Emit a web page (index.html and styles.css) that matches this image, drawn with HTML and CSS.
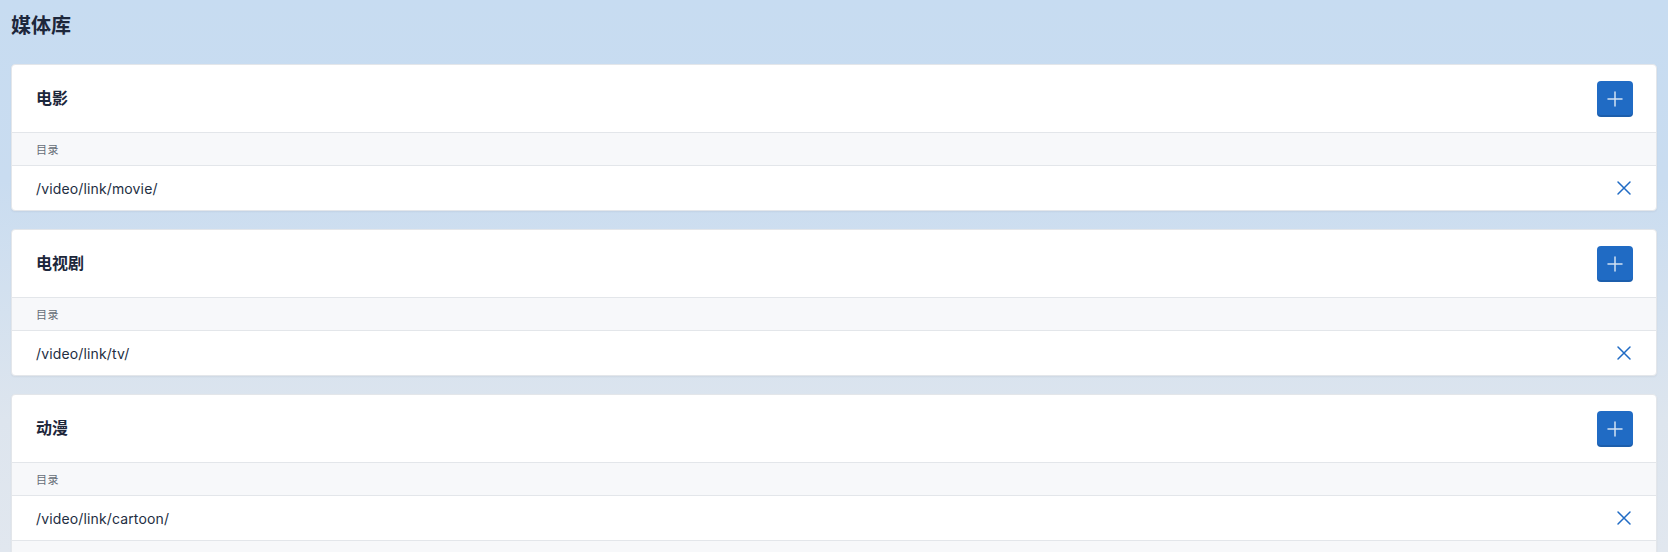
FILE: index.html
```html
<!DOCTYPE html>
<html lang="zh-CN">
<head>
<meta charset="utf-8">
<title>媒体库</title>
<link rel="stylesheet" href="styles.css">
</head>
<body>
<div class="page">
  <div class="page-header"><h1 class="page-title">媒体库</h1></div>
  <div class="cards">
    <section class="card">
      <div class="card-header">
        <h3 class="card-title">电影</h3>
        <button class="btn-add" type="button"><svg viewBox="0 0 24 24" width="24" height="24"><path d="M12 5v14M5 12h14"/></svg></button>
      </div>
      <div class="thead">目录</div>
      <div class="row"><span class="path">/video/link/movie/</span><span class="del"><svg viewBox="0 0 24 24" width="24" height="24"><path d="M18 6L6 18M6 6l12 12"/></svg></span></div>
    </section>
    <section class="card">
      <div class="card-header">
        <h3 class="card-title">电视剧</h3>
        <button class="btn-add" type="button"><svg viewBox="0 0 24 24" width="24" height="24"><path d="M12 5v14M5 12h14"/></svg></button>
      </div>
      <div class="thead">目录</div>
      <div class="row"><span class="path">/video/link/tv/</span><span class="del"><svg viewBox="0 0 24 24" width="24" height="24"><path d="M18 6L6 18M6 6l12 12"/></svg></span></div>
    </section>
    <section class="card">
      <div class="card-header">
        <h3 class="card-title">动漫</h3>
        <button class="btn-add" type="button"><svg viewBox="0 0 24 24" width="24" height="24"><path d="M12 5v14M5 12h14"/></svg></button>
      </div>
      <div class="thead">目录</div>
      <div class="row"><span class="path">/video/link/cartoon/</span><span class="del"><svg viewBox="0 0 24 24" width="24" height="24"><path d="M18 6L6 18M6 6l12 12"/></svg></span></div>
      <div class="row row-muted"></div>
    </section>
  </div>
</div>
</body>
</html>
```
FILE: styles.css
```css
html, body {
  margin: 0;
  padding: 0;
}
body {
  font-family: Inter, "Noto Sans CJK SC", sans-serif;
  color: #1d273b;
  background: linear-gradient(to bottom, #c7dcf1 0px, #c9dcf0 180px, #dde5ee 420px, #e1e7ef 552px);
  background-repeat: no-repeat;
  background-color: #e1e7ef;
  min-height: 100vh;
}
.page {
  padding: 0 11px;
}
.page-header {
  padding-top: 12px;
  margin-bottom: 24px;
}
.page-title {
  margin: 0;
  font-size: 20px;
  line-height: 28px;
  font-weight: 700;
  color: #1d273b;
}
.cards {
  display: flex;
  flex-direction: column;
  gap: 18px;
}
.card {
  background: #fff;
  border: 1px solid #e3e6ea;
  border-radius: 4px;
  box-shadow: 0 1px 2px rgba(29, 39, 59, 0.06);
  overflow: hidden;
}
.card-header {
  height: 67px;
  display: flex;
  align-items: center;
  justify-content: space-between;
  padding: 0 23px 0 24px;
  border-bottom: 1px solid #e3e6ea;
}
.card-title {
  margin: 0 0 2px;
  font-size: 16px;
  line-height: 22px;
  font-weight: 700;
  color: #1d273b;
}
.btn-add {
  width: 36px;
  height: 36px;
  padding: 0;
  border: 0;
  border-radius: 4px;
  background: #206bc4;
  box-shadow: inset 0 -2px 0 rgba(0, 0, 0, 0.12);
  display: flex;
  align-items: center;
  justify-content: center;
  cursor: pointer;
}
.btn-add svg {
  fill: none;
  stroke: rgba(255, 255, 255, 0.8);
  stroke-width: 1.5;
  stroke-linecap: round;
}
.thead {
  height: 32px;
  display: flex;
  align-items: center;
  padding: 0 24px;
  background: #f7f8fa;
  border-bottom: 1px solid #e3e6ea;
  font-size: 11px;
  letter-spacing: 0.04em;
  color: #656d77;
}
.row {
  height: 44px;
  display: flex;
  align-items: center;
  justify-content: space-between;
  padding: 0 20px 0 24px;
  font-size: 14px;
  letter-spacing: 0.01em;
  color: #232e42;
}
.row + .row {
  border-top: 1px solid #e3e6ea;
}
.row-muted {
  background: #f7f8fa;
}
.del {
  display: flex;
  width: 24px;
  height: 24px;
}
.del svg {
  fill: none;
  stroke: #206bc4;
  stroke-width: 1.5;
  stroke-linecap: round;
}
```
